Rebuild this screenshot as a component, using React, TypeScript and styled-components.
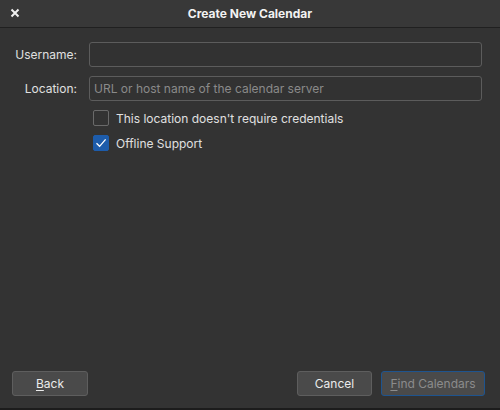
import React, { useState } from "react";
import styled, { createGlobalStyle } from "styled-components";

const GlobalStyle = createGlobalStyle`
  html, body {
    margin: 0;
    padding: 0;
    background: #333333;
  }
  * { box-sizing: border-box; }
`;

const Dialog = styled.div`
  width: 500px;
  height: 410px;
  display: flex;
  flex-direction: column;
  background: #333333;
  font-family: Inter, "Noto Sans", sans-serif;
  font-size: 12px;
  color: #e6e6e6;
  border-bottom: 2px solid #1c1c1c;
`;

const TitleBar = styled.div`
  height: 28px;
  flex: none;
  display: flex;
  align-items: center;
  position: relative;
  background: #383838;
  border-bottom: 1px solid #202020;
`;

const CloseButton = styled.button`
  position: absolute;
  left: 8px;
  top: 6px;
  width: 14px;
  height: 14px;
  padding: 0;
  border: none;
  background: transparent;
  display: flex;
  align-items: center;
  justify-content: center;
`;

const Title = styled.div`
  flex: 1;
  text-align: center;
  font-weight: 700;
  font-size: 12px;
  color: #f2f2f2;
`;

const Body = styled.div`
  flex: 1;
  padding: 14px 18px 0 12px;
  display: grid;
  grid-template-columns: 65px 1fr;
  column-gap: 12px;
  row-gap: 9px;
  align-content: start;
`;

const Label = styled.label`
  text-align: right;
  align-self: center;
  color: #e0e0e0;
`;

const TextInput = styled.input`
  height: 25px;
  width: 100%;
  border: 1px solid #5c5c5c;
  border-radius: 3px;
  background: #323232;
  color: #e6e6e6;
  font: inherit;
  padding: 0 4px;
  outline: none;
  &::placeholder {
    color: #8a8a8a;
  }
`;

const CheckRow = styled.label`
  grid-column: 2;
  display: flex;
  align-items: center;
  gap: 7px;
  padding-left: 4px;
  height: 16px;
  color: #e0e0e0;
`;

const Box = styled.span<{ $checked: boolean }>`
  width: 16px;
  height: 16px;
  border-radius: 2px;
  border: 1px solid ${(p) => (p.$checked ? "#1d5cab" : "#6a6a6a")};
  background: ${(p) => (p.$checked ? "#1d5cab" : "#333333")};
  display: flex;
  align-items: center;
  justify-content: center;
`;

const Footer = styled.div`
  flex: none;
  display: flex;
  align-items: center;
  gap: 9px;
  padding: 0 15px 12px 12px;
`;

const Spacer = styled.div`
  flex: 1;
`;

const Button = styled.button<{ $w: number; $primary?: boolean }>`
  width: ${(p) => p.$w}px;
  height: 25px;
  border-radius: 3px;
  border: 1px solid ${(p) => (p.$primary ? "#1e548f" : "#5e5e5e")};
  background: #4a4a4a;
  color: ${(p) => (p.$primary ? "#8c8c8c" : "#ececec")};
  font: inherit;
  padding: 0;
  u {
    text-decoration-thickness: 1px;
    text-underline-offset: 2px;
  }
`;

function Checkbox({ checked, label, onToggle }: { checked: boolean; label: string; onToggle: () => void }) {
  return (
    <CheckRow onClick={onToggle}>
      <Box $checked={checked}>
        {checked && (
          <svg width="12" height="12" viewBox="0 0 12 12">
            <path d="M1.5 6.2 L4.6 9.3 L10.6 2.3" fill="none" stroke="#ffffff" strokeWidth="1.3" />
          </svg>
        )}
      </Box>
      {label}
    </CheckRow>
  );
}

export default function App() {
  const [noCreds, setNoCreds] = useState(false);
  const [offline, setOffline] = useState(true);

  return (
    <>
      <GlobalStyle />
      <Dialog>
        <TitleBar>
          <CloseButton>
            <svg width="10" height="10" viewBox="0 0 10 10">
              <path d="M1.5 1.5 L8.5 8.5 M8.5 1.5 L1.5 8.5" stroke="#f0f0f0" strokeWidth="2" />
            </svg>
          </CloseButton>
          <Title>Create New Calendar</Title>
        </TitleBar>
        <Body>
          <Label>Username:</Label>
          <TextInput />
          <Label>Location:</Label>
          <TextInput placeholder="URL or host name of the calendar server" />
          <Checkbox checked={noCreds} label="This location doesn't require credentials" onToggle={() => setNoCreds(!noCreds)} />
          <Checkbox checked={offline} label="Offline Support" onToggle={() => setOffline(!offline)} />
        </Body>
        <Footer>
          <Button $w={76}><u>B</u>ack</Button>
          <Spacer />
          <Button $w={75}>Cancel</Button>
          <Button $w={104} $primary disabled><u>F</u>ind Calendars</Button>
        </Footer>
      </Dialog>
    </>
  );
}
